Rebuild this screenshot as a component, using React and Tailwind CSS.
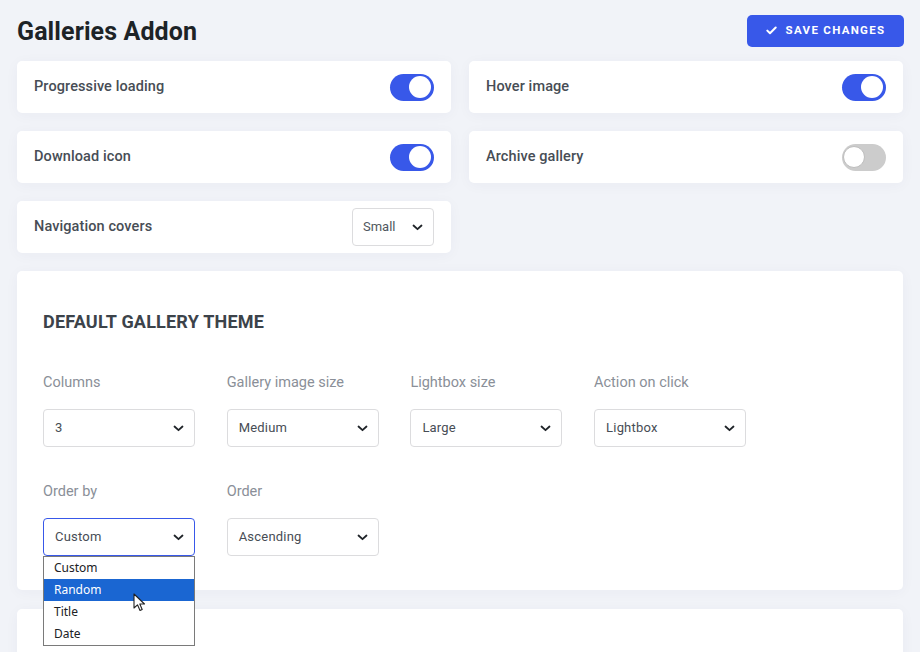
import { useState } from "react";

const font = { fontFamily: "Roboto, 'Liberation Sans', sans-serif" };

function Chevron({ className = "" }) {
  return (
    <svg width="11" height="7" viewBox="0 0 11 7" className={className}>
      <path d="M1.5 1.5 L5.5 5.2 L9.5 1.5" fill="none" stroke="#1f2328" strokeWidth="1.8" strokeLinecap="round" strokeLinejoin="round" />
    </svg>
  );
}

function Toggle({ on }) {
  return (
    <div
      className={`w-[44px] h-[27px] rounded-full p-[3px] flex items-center ${
        on ? "bg-[#3858e9] justify-end" : "bg-[#cccccc] justify-start"
      }`}
    >
      <div
        className={`w-[22px] h-[22px] rounded-full bg-white ${on ? "" : "-ml-[2px] border border-[#bdbdbd]"}`}
      />
    </div>
  );
}

function Card({ label, children }) {
  return (
    <div className="h-[52px] bg-white rounded-[5px] px-[17px] flex items-center justify-between shadow-[0_2px_14px_rgba(40,50,100,0.04)]">
      <span className="text-[14.5px] font-medium text-[#474d55] tracking-[0.1px]">{label}</span>
      {children}
    </div>
  );
}

function Select({ value, focused, className = "" }) {
  return (
    <div
      className={`h-[38px] w-[152px] rounded-[4px] bg-white flex items-center justify-between pl-[11px] pr-[10px] ${
        focused ? "border-[1.5px] border-[#3858e9]" : "border border-[#dcdcde]"
      } ${className}`}
    >
      <span className="text-[13px] text-[#474d55] tracking-[0.2px]">{value}</span>
      <Chevron />
    </div>
  );
}

function Field({ label, value, focused, children }) {
  return (
    <div className="relative flex flex-col gap-[16px]">
      <span className="text-[14.5px] leading-[20px] text-[#8a8f98]">{label}</span>
      <Select value={value} focused={focused} />
      {children}
    </div>
  );
}

function OrderMenu() {
  const items = ["Custom", "Random", "Title", "Date"];
  const [active] = useState("Random");
  return (
    <div className="absolute left-0 top-[74px] w-[152px] bg-white border border-[#7a7a7a] z-10" style={{ fontFamily: "'Noto Sans', Roboto, sans-serif" }}>
      {items.map((item) => (
        <div
          key={item}
          className={`h-[22px] pl-[10px] flex items-center text-[12px] ${
            item === active ? "bg-[#1a66d2] text-white" : "text-[#202124]"
          }`}
        >
          {item}
        </div>
      ))}
      {/* mouse pointer over the highlighted row */}
      <svg width="13" height="19" viewBox="0 0 13 19" className="absolute left-[89px] top-[36px]">
        <path d="M1 1 L1 15 L4.5 11.8 L7 17.5 L9.2 16.5 L6.8 11 L11.5 11 Z" fill="white" stroke="#222" strokeWidth="1.1" strokeLinejoin="round" />
      </svg>
    </div>
  );
}

export default function App() {
  return (
    <div className="h-screen bg-[#f1f3f8] px-[17px] pt-[14px] overflow-hidden" style={font}>
      <div className="flex items-center justify-between h-[33px]">
        <h1 className="text-[25px] font-bold text-[#1d2327] tracking-[0.1px] pt-[2px]">Galleries Addon</h1>
        <button className="h-[32px] w-[157px] mr-[-1px] rounded-[5px] bg-[#3858e9] text-white flex items-center justify-center gap-[9px] text-[11.5px] font-bold tracking-[1.3px]">
          <svg width="11" height="9" viewBox="0 0 11 9">
            <path d="M1.3 4.6 L4 7.3 L9.7 1.5" fill="none" stroke="white" strokeWidth="2" strokeLinecap="round" strokeLinejoin="round" />
          </svg>
          SAVE CHANGES
        </button>
      </div>

      <div className="grid grid-cols-2 gap-x-[18px] gap-y-[18px] mt-[14px]">
        <Card label="Progressive loading">
          <Toggle on />
        </Card>
        <Card label="Hover image">
          <Toggle on />
        </Card>
        <Card label="Download icon">
          <Toggle on />
        </Card>
        <Card label="Archive gallery">
          <Toggle on={false} />
        </Card>
        <Card label="Navigation covers">
          <div className="h-[38px] w-[82px] rounded-[4px] border border-[#dcdcde] flex items-center justify-between pl-[10px] pr-[10px]">
            <span className="text-[13px] text-[#50575e]">Small</span>
            <Chevron />
          </div>
        </Card>
      </div>

      <div className="mt-[18px] bg-white rounded-[5px] pl-[26px] pt-[41px] h-[319px] shadow-[0_2px_14px_rgba(40,50,100,0.04)]">
        <h2 className="text-[18px] leading-[20px] font-bold text-[#3c434a] tracking-[0.2px]">DEFAULT GALLERY THEME</h2>
        <div className="mt-[41px] flex gap-[31.7px]">
          <Field label="Columns" value="3" />
          <Field label="Gallery image size" value="Medium" />
          <Field label="Lightbox size" value="Large" />
          <Field label="Action on click" value="Lightbox" />
        </div>
        <div className="mt-[35px] flex gap-[31.7px]">
          <Field label="Order by" value="Custom" focused>
            <OrderMenu />
          </Field>
          <Field label="Order" value="Ascending" />
        </div>
      </div>

      <div className="mt-[19px] bg-white rounded-[5px] h-[200px] shadow-[0_2px_14px_rgba(40,50,100,0.04)]" />
    </div>
  );
}
